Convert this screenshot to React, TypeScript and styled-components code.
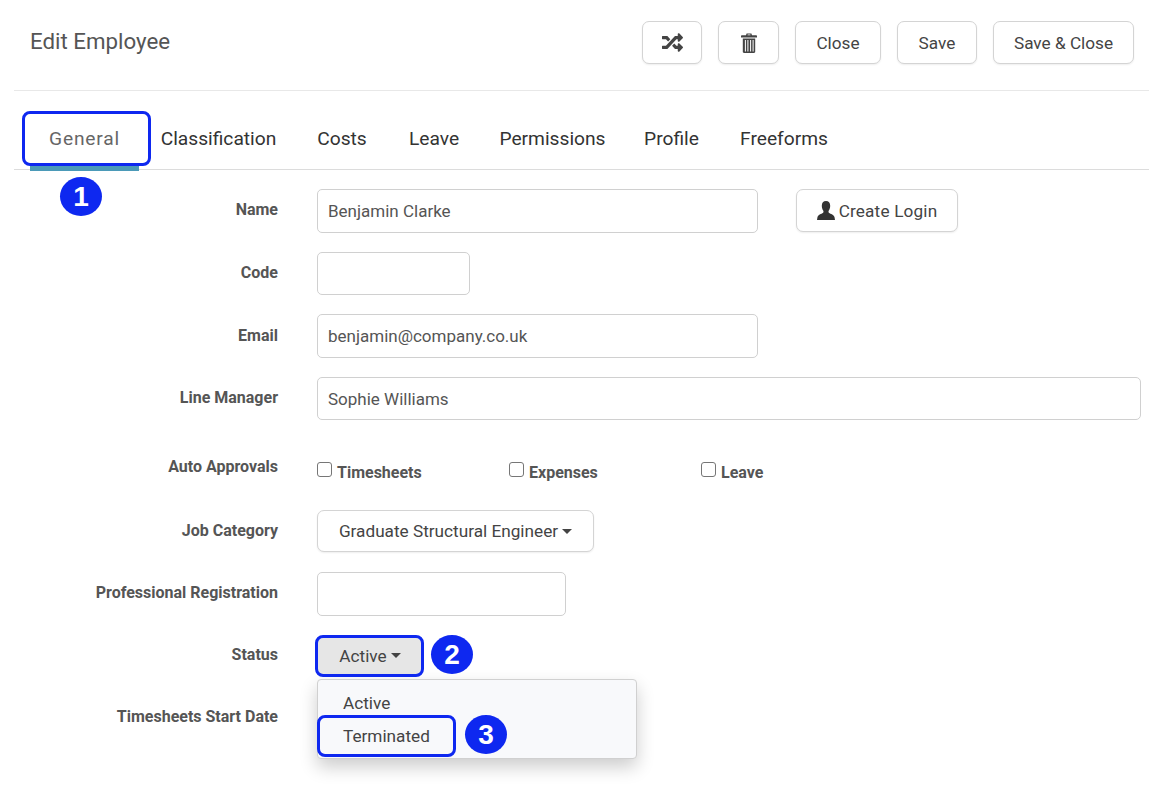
import React from "react";
import styled, { createGlobalStyle } from "styled-components";
import { FaRandom } from "react-icons/fa";

const Global = createGlobalStyle`
  html, body { margin: 0; padding: 0; background: #fff; }
  body { font-family: Roboto, "Open Sans", Arial, sans-serif; color: #555; }
`;

const Page = styled.div`
  width: 1164px;
  height: 792px;
  overflow: hidden;
  box-sizing: border-box;
  padding: 0 15px 0 14px;
`;

const Header = styled.header`
  height: 91px;
  box-sizing: border-box;
  border-bottom: 1px solid #e8e8e8;
  display: flex;
  justify-content: space-between;
  padding: 21px 15px 0 16px;
`;

const Title = styled.h1`
  margin: 5px 0 0;
  font-size: 22.3px;
  line-height: 31px;
  font-weight: 400;
  color: #555;
`;

const Toolbar = styled.div`
  display: flex;
  gap: 16px;
  align-items: flex-start;
`;

const Button = styled.button<{ $w: number; $h?: number; $active?: boolean; $ml?: number; $ls?: number }>`
  width: ${(p) => p.$w}px;
  height: ${(p) => p.$h ?? 43}px;
  margin-left: ${(p) => p.$ml ?? 0}px;
  box-sizing: border-box;
  padding: 0;
  border: 1px solid #d4d4d4;
  border-radius: 7px;
  background: ${(p) => (p.$active ? "#e6e6e6" : "#fff")};
  box-shadow: 0 1px 2px rgba(0, 0, 0, 0.07);
  color: #444;
  font: 400 17.2px Roboto, sans-serif;
  letter-spacing: ${(p) => p.$ls ?? 0}px;
  display: inline-flex;
  align-items: center;
  justify-content: center;
  gap: 4px;
  white-space: nowrap;
`;

const Caret = styled.span`
  width: 0;
  height: 0;
  border-left: 5px solid transparent;
  border-right: 5px solid transparent;
  border-top: 5px solid #444;
`;

const Tabs = styled.nav`
  position: relative;
  height: 79px;
  box-sizing: border-box;
  border-bottom: 1px solid #dcdcdc;
  display: flex;
  padding: 20px 0 0 16px;
`;

const Tab = styled.a<{ $w: number; $active?: boolean }>`
  width: ${(p) => p.$w}px;
  height: 60px;
  margin-bottom: -2px;
  box-sizing: border-box;
  border-bottom: ${(p) => (p.$active ? "5px solid #4b9ab8" : "none")};
  font-size: 19.2px;
  letter-spacing: ${(p) => (p.$active ? "0.8px" : "0")};
  line-height: 56px;
  text-align: center;
  color: ${(p) => (p.$active ? "#666" : "#333")};
`;

const Highlight = styled.span<{ $l: number; $t: number; $w: number; $h: number }>`
  position: absolute;
  left: ${(p) => p.$l}px;
  top: ${(p) => p.$t}px;
  width: ${(p) => p.$w}px;
  height: ${(p) => p.$h}px;
  box-sizing: border-box;
  border: 3px solid #0e28f0;
  border-radius: 8px;
  pointer-events: none;
  z-index: 3;
`;

const Badge = styled.span<{ $l: number; $t: number }>`
  position: absolute;
  left: ${(p) => p.$l}px;
  top: ${(p) => p.$t}px;
  width: 42px;
  height: 39px;
  border-radius: 50%;
  background: #0e28f0;
  color: #fff;
  font: 700 28px/40px "Liberation Sans", Arial, sans-serif;
  text-align: center;
  z-index: 3;
`;

const Form = styled.form`
  display: flex;
  flex-direction: column;
  padding: 19px 8px 0 0;
`;

const Row = styled.div<{ $mb?: number; $h?: number }>`
  position: relative;
  display: flex;
  align-items: flex-start;
  min-height: ${(p) => p.$h ?? 44}px;
  margin-bottom: ${(p) => p.$mb ?? 19}px;
`;

const Label = styled.label<{ $pt?: number }>`
  width: 264px;
  flex: none;
  text-align: right;
  font-size: 16px;
  font-weight: 700;
  line-height: 22px;
  color: #555;
  padding-top: ${(p) => p.$pt ?? 10}px;
  margin-right: 39px;
`;

const Input = styled.div<{ $w?: number; $h?: number }>`
  width: ${(p) => (p.$w ? `${p.$w}px` : "auto")};
  flex: ${(p) => (p.$w ? "none" : 1)};
  box-sizing: border-box;
  height: ${(p) => p.$h ?? 44}px;
  border: 1px solid #d0d0d0;
  border-radius: 5px;
  padding: 0 10px;
  font-size: 17px;
  line-height: 42px;
  color: #555;
`;

const Checks = styled.div`
  display: flex;
  padding-top: 13px;
`;

const Check = styled.label`
  width: 192px;
  display: flex;
  align-items: flex-start;
  font-size: 16px;
  font-weight: 700;
  line-height: 22px;
  color: #555;
`;

const CheckBox = styled.span`
  width: 15px;
  height: 15px;
  box-sizing: border-box;
  border: 1px solid #767676;
  border-radius: 3px;
  background: #fff;
  margin: 0 5px 0 0;
`;

const Menu = styled.div`
  position: absolute;
  left: 303px;
  top: 43px;
  width: 320px;
  height: 80px;
  box-sizing: border-box;
  background: #f8f9fb;
  border: 1px solid #d0d0d0;
  border-radius: 4px;
  box-shadow: 0 8px 18px rgba(0, 0, 0, 0.2);
  padding: 7px 0 0 25px;
  z-index: 2;
`;

const MenuItem = styled.div`
  font-size: 17.2px;
  height: 33px;
  line-height: 33px;
  color: #444;
`;

function TrashIcon() {
  return (
    <svg width="16" height="20" viewBox="0 0 16 20" fill="#444">
      <path fillRule="evenodd" d="M5 2.200 5.600.4h4.800l.6 1.800h4c.5 0 1 .4 1 1V4.400H0V3.200c0-.6.500-1 1-1zM6.500 2.200h3L9.300 1.400H6.700z" />
      <path fillRule="evenodd" d="M1.800 5.400h12.400V18.800c0 .7-.5 1.200-1.200 1.200H3c-.7 0-1.200-.5-1.200-1.200zM3.900 7v11.500h1V7zm2.500 0v11.500h1V7zm2.700 0v11.500h1V7zm2.500 0v11.500h1V7z" />
    </svg>
  );
}

function UserIcon() {
  return (
    <svg width="18" height="19" viewBox="0 0 18 19" fill="#333">
      <path d="M9 0c2.700 0 4.200 2 4.200 4.800 0 2-.7 3.800-1.400 4.800-.5.800-.4 2 .3 2.500 1.400.9 5 1.900 5.500 4.300L18 19H0l.4-2.600c.5-2.400 4.100-3.400 5.500-4.300.7-.5.800-1.700.3-2.500-.7-1-1.400-2.800-1.400-4.800C4.800 2 6.300 0 9 0z" />
    </svg>
  );
}

export default function App() {
  return (
    <Page>
      <Global />
      <Header>
        <Title>Edit Employee</Title>
        <Toolbar>
          <Button $w={60} aria-label="Shuffle"><FaRandom size={21} /></Button>
          <Button $w={61} aria-label="Delete"><TrashIcon /></Button>
          <Button $w={86}>Close</Button>
          <Button $w={80}>Save</Button>
          <Button $w={141}>Save &amp; Close</Button>
        </Toolbar>
      </Header>
      <Tabs>
        <Tab $w={109} $active>General</Tab>
        <Tab $w={159}>Classification</Tab>
        <Tab $w={88}>Costs</Tab>
        <Tab $w={96}>Leave</Tab>
        <Tab $w={141}>Permissions</Tab>
        <Tab $w={97}>Profile</Tab>
        <Tab $w={128}>Freeforms</Tab>
        <Highlight $l={8} $t={20} $w={129} $h={55} />
        <Badge $l={46} $t={86}>1</Badge>
      </Tabs>
      <Form>
        <Row>
          <Label>Name</Label>
          <Input $w={441}>Benjamin Clarke</Input>
          <Button $w={162} $ml={38} $ls={0.17}><UserIcon />Create Login</Button>
        </Row>
        <Row $mb={19} $h={43}>
          <Label>Code</Label>
          <Input $w={153} $h={43} />
        </Row>
        <Row>
          <Label $pt={11}>Email</Label>
          <Input $w={441}>benjamin@company.co.uk</Input>
        </Row>
        <Row $mb={29} $h={43}>
          <Label>Line Manager</Label>
          <Input $h={43}>Sophie Williams</Input>
        </Row>
        <Row $h={36} $mb={25}>
          <Label $pt={7}>Auto Approvals</Label>
          <Checks>
            <Check><CheckBox />Timesheets</Check>
            <Check><CheckBox />Expenses</Check>
            <Check><CheckBox />Leave</Check>
          </Checks>
        </Row>
        <Row $h={42} $mb={20}>
          <Label>Job Category</Label>
          <Button $w={277} $h={42}>Graduate Structural Engineer <Caret /></Button>
        </Row>
        <Row $mb={20}>
          <Label>Professional Registration</Label>
          <Input $w={249} />
        </Row>
        <Row $h={42} $mb={28}>
          <Label $pt={8}>Status</Label>
          <Button $w={106} $h={39} $active>Active <Caret /></Button>
          <Highlight $l={301} $t={-1} $w={109} $h={42} />
          <Badge $l={417} $t={-1}>2</Badge>
          <Menu>
            <MenuItem>Active</MenuItem>
            <MenuItem>Terminated</MenuItem>
          </Menu>
          <Highlight $l={303} $t={79} $w={139} $h={42} />
          <Badge $l={451} $t={79}>3</Badge>
        </Row>
        <Row>
          <Label $pt={0}>Timesheets Start Date</Label>
        </Row>
      </Form>
    </Page>
  );
}
